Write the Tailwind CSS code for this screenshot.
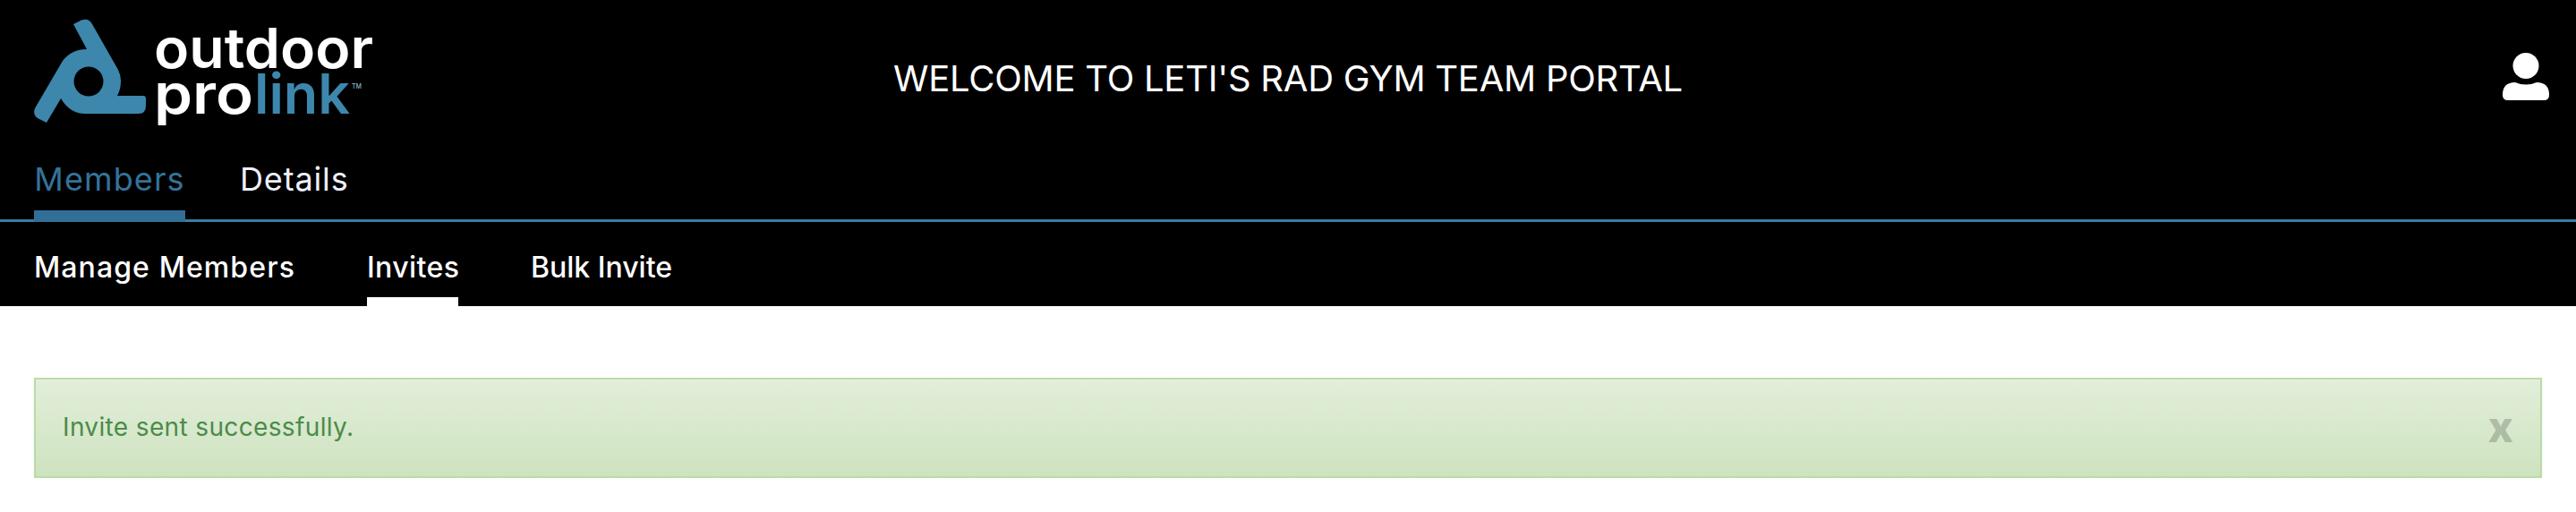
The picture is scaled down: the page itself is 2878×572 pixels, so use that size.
<!DOCTYPE html>
<html lang="en">
<head>
<meta charset="utf-8">
<title>Team Portal</title>
<script src="https://cdn.jsdelivr.net/npm/@tailwindcss/browser@4"></script>
</head>
<body class="bg-white font-['Inter','Liberation_Sans',sans-serif] overflow-hidden">
<header class="bg-black">
  <div class="h-[175px] grid grid-cols-[1fr_auto_1fr] items-center">
    <svg class="w-[420px] h-[175px]" viewBox="0 0 420 175" fill="none" aria-label="outdoor prolink">
      <path fill-rule="evenodd" fill="#3d87ad" d="M82 27 L91 22.5 Q99 19.5 103 27 L132 78 Q135 84 135 90 Q135 100 131 107 L160 107 Q163 107 163 110 L163 118 Q163 127 155 127 L95 127 Q78 127 68 110 L52 137 L42 132 Q36 128 39 121 L70 68 Q80 55 97 55 Z M99 74.5 A16.5 16.5 0 1 0 99 107.500 A16.5 16.5 0 1 0 99 74.5 Z"/>
      <text x="172" y="76" font-size="62" font-weight="600" fill="#fff" textLength="245" lengthAdjust="spacingAndGlyphs">outdoor</text>
      <text x="172" y="127" font-size="62" font-weight="600" fill="#fff" textLength="111" lengthAdjust="spacingAndGlyphs">pro</text>
      <text x="284" y="127" font-size="62" font-weight="600" fill="#3d87ad" textLength="107" lengthAdjust="spacingAndGlyphs">link</text>
      <text x="393" y="99" font-size="7" font-weight="500" fill="#8fb8cf" textLength="11" lengthAdjust="spacingAndGlyphs">TM</text>
    </svg>
    <h1 class="text-[40px] leading-none font-normal text-white whitespace-nowrap tracking-[-0.25px] mt-[1px]">WELCOME TO LETI'S RAD GYM TEAM PORTAL</h1>
    <div class="flex justify-end pr-[30px]">
      <svg class="w-[52px] h-[53px] -mt-[5px]" viewBox="0 0 52 53" aria-label="Profile">
        <circle cx="26" cy="14.500" r="14.500" fill="#fff"/>
        <path fill="#fff" d="M14 33 Q20 35.500 26 35.500 Q32 35.500 38 33 Q52 33 52 47 Q52 53 46 53 L6 53 Q0 53 0 47 Q0 33 14 33 Z"/>
      </svg>
    </div>
  </div>
  <nav class="h-[73px] flex gap-[61px] px-[38px] border-b-[3px] border-[#3a7ca5] text-[36px] leading-none">
    <a class="w-[169px] h-[73px] pt-[7px] border-b-[13px] border-[#326f97] text-[#33739b] text-center tracking-[1.1px]">Members</a>
    <a class="pt-[7px] text-[#eef0fa] tracking-[0.85px]">Details</a>
  </nav>
  <nav class="h-[94px] flex px-[38px] text-[32px] leading-none font-medium text-white">
    <a class="w-[291px] pt-[35px] whitespace-nowrap tracking-[1.1px]">Manage Members</a>
    <a class="ml-[81px] w-[102px] h-[94px] pt-[35px] border-b-[10px] border-white text-center tracking-[0.4px]">Invites</a>
    <a class="ml-[81px] pt-[35px] whitespace-nowrap">Bulk Invite</a>
  </nav>
</header>
<main class="px-[38px] pt-[80px]">
  <div class="h-[112px] flex items-center justify-between pl-[30px] pr-[30px] border-2 border-[#b8dca6] bg-linear-to-b from-[#e2eeda] to-[#cee3bf] shadow-[inset_0_1px_0_rgba(255,255,255,0.25),0_1px_2px_rgba(0,0,0,0.05)] text-[#4b8b4a]">
    <span class="text-[28px] leading-none tracking-[0.36px] -mt-[2px]">Invite sent successfully.</span>
    <span class="text-[48px] leading-none font-extrabold text-black/20 -mt-[3px]">x</span>
  </div>
</main>
</body>
</html>
